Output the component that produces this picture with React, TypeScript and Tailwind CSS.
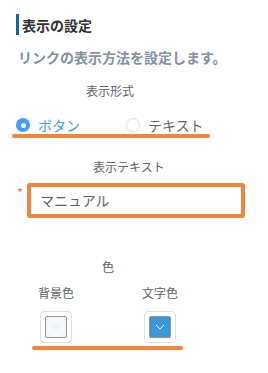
import React from "react";

const font = { fontFamily: '"Noto Sans CJK JP", "Noto Sans", sans-serif' };

function Chevron({ color }: { color: string }) {
  return (
    <svg width="10" height="6" viewBox="0 0 10 6" fill="none">
      <path d="M1 1 L5 5 L9 1" stroke={color} strokeWidth="1" />
    </svg>
  );
}

function Swatch({ bg, chev }: { bg: string; chev: string }) {
  return (
    <div className="w-[32px] h-[32px] border border-[#dcdfe6] rounded-[4px] p-[4px] bg-white">
      <div
        className={`w-full h-full border border-[#909399] rounded-[2px] flex items-center justify-center ${bg}`}
      >
        <Chevron color={chev} />
      </div>
    </div>
  );
}

export default function App() {
  return (
    <div className="w-[268px] h-[373px] bg-white overflow-hidden flex flex-col" style={font}>
      <div className="mt-[14px] ml-[16px] h-[21px] flex items-center border-l-[3px] border-[#0a6a9c] pl-[3px] text-[14px] font-bold text-[#303133] leading-none">
        表示の設定
      </div>
      <div className="mt-[12px] ml-[18px] leading-[20px] text-[14px] font-bold text-[#8190a5]">
        リンクの表示方法を設定します。
      </div>
      <div className="mt-[16px] pl-[86px] leading-[16px] text-[12px] text-[#606266]">表示形式</div>
      <div className="mt-[17px] ml-[16px] h-[18px] flex items-center">
        <span className="w-[14px] h-[14px] rounded-full bg-[#409eff] flex items-center justify-center">
          <span className="w-[5px] h-[5px] rounded-full bg-white" />
        </span>
        <span className="ml-[8px] text-[14px] leading-none text-[#409eff]">ボタン</span>
        <span className="ml-[46px] w-[14px] h-[14px] rounded-full border border-[#dcdfe6] bg-white" />
        <span className="ml-[8px] text-[14px] leading-none text-[#606266]">テキスト</span>
      </div>
      <div className="ml-[12px] w-[198px] h-[4px] rounded-full bg-[#f5843a]" />
      <div className="mt-[21px] pl-[93px] leading-[16px] text-[12px] text-[#606266]">表示テキスト</div>
      <div className="mt-[8px] ml-[17px] flex items-start">
        <span className="mt-[3px] w-[10px] text-[13px] leading-[13px] text-[#f56c6c]">*</span>
        <div className="w-[218px] h-[35px] border-[4px] border-[#f5843a] rounded-[3px] bg-white flex items-center pl-[9px] text-[14px] text-[#606266]">
          マニュアル
        </div>
      </div>
      <div className="mt-[41px] pl-[102px] leading-[16px] text-[12px] text-[#606266]">色</div>
      <div className="mt-[10px] flex leading-[16px] text-[12px] text-[#606266]">
        <span className="ml-[38px]">背景色</span>
        <span className="ml-[68px]">文字色</span>
      </div>
      <div className="mt-[10px] flex">
        <div className="ml-[40px]">
          <Swatch bg="bg-[#f4f6f9]" chev="#dcdfe6" />
        </div>
        <div className="ml-[72px]">
          <Swatch bg="bg-[#3a98db]" chev="#ffffff" />
        </div>
      </div>
      <div className="mt-[3px] ml-[32px] w-[151px] h-[4px] rounded-full bg-[#f5843a]" />
    </div>
  );
}
